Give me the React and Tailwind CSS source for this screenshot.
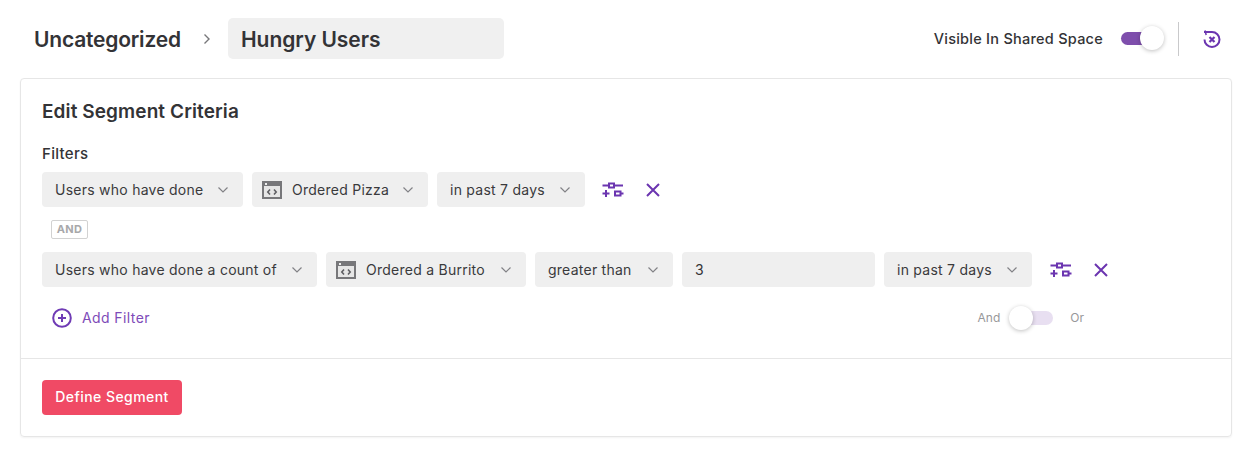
import React from "react";

const Chevron = () => (
  <svg width="12" height="8" viewBox="0 0 12 8" fill="none" stroke="#828286" strokeWidth="1.2" className="shrink-0">
    <path d="M1.500 1.500 6 6l4.500-4.500" />
  </svg>
);

const EventIcon = () => (
  <svg width="20" height="18" viewBox="0 0 20 18" className="shrink-0 -ml-[3px] mr-[10px]" fill="none">
    <rect x="1" y="1" width="18" height="16" fill="#e6e6e6" stroke="#77777a" strokeWidth="2" />
    <rect x="1" y="1" width="18" height="4" fill="#77777a" />
    <rect x="3" y="2" width="2" height="2" fill="#eee" />
    <path d="M8 8.500 5.800 11 8 13.500M12 8.500l2.200 2.500-2.200 2.500" stroke="#5f5f63" strokeWidth="1.600" />
  </svg>
);

const Sliders = () => (
  <svg width="22" height="16" viewBox="0 0 22 16" fill="none" stroke="#6b35b0" strokeWidth="2" className="shrink-0">
    <path d="M0.500 3.500H7M12 3.500h9M0.500 11.500h7M4 8v7M18.500 11.500h3" />
    <rect x="7" y="1.500" width="5" height="4" />
    <rect x="13" y="9.500" width="5.500" height="4" />
  </svg>
);

const Close = () => (
  <svg width="14" height="14" viewBox="0 0 14 14" fill="none" stroke="#6b35b0" strokeWidth="2" className="shrink-0">
    <path d="M1 1l12 12M13 1 1 13" />
  </svg>
);

function Select({ w, icon, children }) {
  return (
    <div className={`${w} h-[35px] shrink-0 rounded-[4px] bg-[#efefef] flex items-center pl-[13px] pr-[14px] text-[14px] tracking-[0.25px] text-[#3a3a3c]`}>
      {icon && <EventIcon />}
      <span className="flex-1 whitespace-nowrap">{children}</span>
      <Chevron />
    </div>
  );
}

export default function App() {
  return (
    <div className="w-[1255px] h-[455px] bg-white pl-[20px] pr-[23px] pt-[18px] font-['Inter',sans-serif] text-[#333336] overflow-hidden">
      <header className="h-[41px] flex items-center">
        <h1 className="ml-[14px] w-[169px] pt-[2px] text-[21px] font-semibold tracking-[-0.2px]">Uncategorized</h1>
        <svg width="8" height="12" viewBox="0 0 8 12" fill="none" stroke="#77777a" strokeWidth="1.4" className="mr-[17px]">
          <path d="M1.500 1.500 6 6l-4.500 4.500" />
        </svg>
        <div className="w-[276px] h-[41px] rounded-[5px] bg-[#f0f0f0] pl-[13px] pt-[2px] flex items-center text-[21px] font-semibold tracking-[-0.05px]">Hungry Users</div>
        <div className="ml-auto flex items-center h-[34px]">
          <span className="text-[14.5px] font-medium tracking-[0.25px]">Visible In Shared Space</span>
          <div className="relative ml-[18px] w-[33px] h-[13px] rounded-full bg-[#7e4eac]">
            <div className="absolute right-[-10px] top-[-6px] w-[24px] h-[24px] rounded-full bg-white shadow-[0_1px_4px_rgba(0,0,0,0.25)]" />
          </div>
          <div className="ml-[24px] w-px h-[34px] bg-[#c9c9cb]" />
          <svg width="20" height="20" viewBox="0 0 20 20" fill="none" stroke="#6b35b0" className="ml-[23px] mr-[10px]">
            <path d="M2 3h8a7.500 7.500 0 1 1-7.500 7.500" strokeWidth="2" />
            <path d="M3 1.500 4.200 6" strokeWidth="1.500" />
            <path d="m7.500 8 5 5M12.500 8l-5 5" strokeWidth="2.200" />
          </svg>
        </div>
      </header>

      <section className="mt-[19px] w-[1212px] h-[359px] rounded-[4px] border border-[#e6e6e6] shadow-[0_1px_2px_rgba(0,0,0,0.05)] flex flex-col">
        <div className="h-[280px] border-b border-[#e6e6e6] px-[21px] pt-[21px]">
          <h2 className="text-[19px] leading-[24px] font-semibold tracking-[0.1px]">Edit Segment Criteria</h2>
          <h3 className="mt-[22px] text-[15px] leading-[16px] font-medium tracking-[0.3px]">Filters</h3>
          <div className="mt-[10px] flex items-center gap-[9px]">
            <Select w="w-[201px]">Users who have done</Select>
            <Select w="w-[176px]" icon>Ordered Pizza</Select>
            <Select w="w-[148px]">in past 7 days</Select>
            <div className="ml-[8px] flex items-center gap-[22px]"><Sliders /><Close /></div>
          </div>
          <div className="ml-[9px] mt-[13px] w-[37px] h-[19px] rounded-[2px] border border-[#d2d2d2] flex items-center justify-center text-[11px] font-bold tracking-[0.4px] text-[#a8a8aa]">AND</div>
          <div className="mt-[13px] flex items-center gap-[9px]">
            <Select w="w-[275px]">Users who have done a count of</Select>
            <Select w="w-[200px]" icon>Ordered a Burrito</Select>
            <Select w="w-[138px]">greater than</Select>
            <div className="w-[193px] h-[35px] shrink-0 rounded-[4px] bg-[#efefef] pl-[13px] flex items-center text-[14px]">3</div>
            <Select w="w-[148px]">in past 7 days</Select>
            <div className="ml-[9px] flex items-center gap-[22px]"><Sliders /><Close /></div>
          </div>
          <div className="mt-[20px] h-[22px] flex items-center">
            <svg width="20" height="20" viewBox="0 0 20 20" fill="none" stroke="#6f3bb5" strokeWidth="2" className="ml-[10px]">
              <circle cx="10" cy="10" r="8.800" />
              <path d="M10 6v8M6 10h8" />
            </svg>
            <span className="ml-[10px] pb-[1px] text-[14px] tracking-[0.4px] text-[#7e4bb8]">Add Filter</span>
            <div className="ml-auto mr-[126px] flex items-center text-[12px] text-[#98989a]">
              <span>And</span>
              <div className="relative ml-[20px] w-[33px] h-[14px] rounded-full bg-[#e8dff1]">
                <div className="absolute left-[-11px] top-[-5px] w-[24px] h-[24px] rounded-full bg-white shadow-[0_1px_4px_rgba(0,0,0,0.25)]" />
              </div>
              <span className="ml-[17px]">Or</span>
            </div>
          </div>
        </div>
        <div className="px-[21px] pt-[21px]">
          <button className="w-[140px] h-[35px] pb-[2px] rounded-[4px] bg-[#f04a65] text-white text-[14px] font-medium tracking-[0.45px]">Define Segment</button>
        </div>
      </section>
    </div>
  );
}
